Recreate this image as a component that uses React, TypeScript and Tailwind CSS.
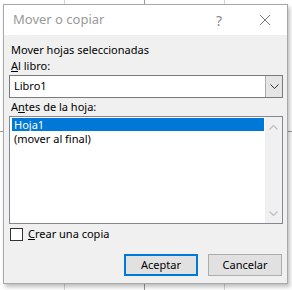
import React, { useState } from "react";

const fuente = { fontFamily: '"Segoe UI", "Noto Sans", "Open Sans", sans-serif' };

const MoverCopiar: React.FC = () => {
    const [crearCopia, setCrearCopia] = useState<boolean>(false);
    const [seleccion, setSeleccion] = useState<number>(0);
    const hojas = ["Hoja1", "(mover al final)"];

    return (
        <div className="relative w-[292px] h-[290px] bg-white overflow-hidden" style={fuente}>
            {/* cuadricula de excel detras */}
            <div className="absolute left-[144px] top-0 w-px h-full bg-[#9a9a9a]"></div>
            <div className="absolute left-[64px] top-0 w-px h-full bg-[#d4d4d4]"></div>
            <div className="absolute left-[224px] top-0 w-px h-full bg-[#d4d4d4]"></div>
            <div className="absolute left-0 top-[131px] w-full h-px bg-[#9a9a9a]"></div>

            <div className="relative ml-[3px] mt-[4px] w-[285px] h-[280px] border border-[#a8a8a8] bg-[#f0f0f0] flex flex-col shadow-[2px_3px_4px_rgba(0,0,0,0.25)]">
                <div className="h-[30px] bg-white flex items-center pl-[9px] text-[13px] text-[#999999]">
                    <span className="flex-1">Mover o copiar</span>
                    <span className="w-[20px] text-center text-[14px] text-[#888888] mr-[30px]">?</span>
                    <svg width="12" height="12" viewBox="0 0 12 12" className="mr-[16px]">
                        <path d="M1 1 L11 11 M11 1 L1 11" stroke="#777777" strokeWidth="1" />
                    </svg>
                </div>

                <div className="flex flex-col pl-[5px] pr-[4px] pt-[7px] text-[11px] text-black">
                    <div className="leading-[16px] pl-[2px]">Mover hojas seleccionadas</div>
                    <div className="leading-[16px] pl-[2px]"><span className="underline">A</span>l libro:</div>
                    <div className="mt-[1px] h-[23px] border border-[#7a7a7a] bg-white flex">
                        <div className="flex-1 flex items-center pl-[4px]">Libro1</div>
                        <div className="w-[17px] bg-[#e5e5e5] flex items-center justify-center border-l border-[#adadad]">
                            <svg width="9" height="5" viewBox="0 0 9 5">
                                <path d="M0.5 0.5 L4.5 4.5 L8.5 0.5" stroke="#333333" fill="none" strokeWidth="1" />
                            </svg>
                        </div>
                    </div>
                    <div className="leading-[16px] mt-[1px] pl-[2px]">A<span className="underline">n</span>tes de la hoja:</div>
                    <div className="mt-[1px] h-[108px] border border-[#828790] bg-white flex">
                        <div className="flex-1 flex flex-col pt-[1px] pl-[2px] pr-[1px]">
                            {hojas.map((h, i) => (
                                <div
                                    key={i}
                                    onClick={() => setSeleccion(i)}
                                    className={seleccion === i ? "h-[13px] flex items-center pl-[2px] bg-[#0078d7] text-white" : "h-[13px] mt-[1px] flex items-center pl-[2px]"}
                                >
                                    <span className="leading-[12px]">{h}</span>
                                </div>
                            ))}
                        </div>
                        <div className="w-[17px] bg-[#f0f0f0] flex flex-col justify-between items-center pt-[8px] pb-[7px]">
                            <svg width="9" height="5" viewBox="0 0 9 5">
                                <path d="M0.5 4.5 L4.5 0.5 L8.5 4.5" stroke="#c2c2c2" fill="none" strokeWidth="1.4" />
                            </svg>
                            <svg width="9" height="5" viewBox="0 0 9 5">
                                <path d="M0.5 0.5 L4.5 4.5 L8.5 0.5" stroke="#c2c2c2" fill="none" strokeWidth="1.4" />
                            </svg>
                        </div>
                    </div>
                    <label className="mt-[4px] ml-[1px] flex items-center gap-[5px] h-[13px]">
                        <span
                            onClick={() => setCrearCopia(!crearCopia)}
                            className="w-[13px] h-[13px] border border-[#333333] bg-white flex items-center justify-center text-[10px]"
                        >
                            {crearCopia ? "✓" : ""}
                        </span>
                        <span><span className="underline">C</span>rear una copia</span>
                    </label>
                    <div className="flex justify-end gap-[10px] mt-[13px] pr-[1px]">
                        <button className="w-[74px] h-[22px] border-2 border-[#0078d7] bg-[#e1e1e1] text-[11px]">Aceptar</button>
                        <button className="w-[74px] h-[22px] border border-[#adadad] bg-[#e1e1e1] text-[11px]">Cancelar</button>
                    </div>
                </div>
            </div>
        </div>
    );
};

export default MoverCopiar;
